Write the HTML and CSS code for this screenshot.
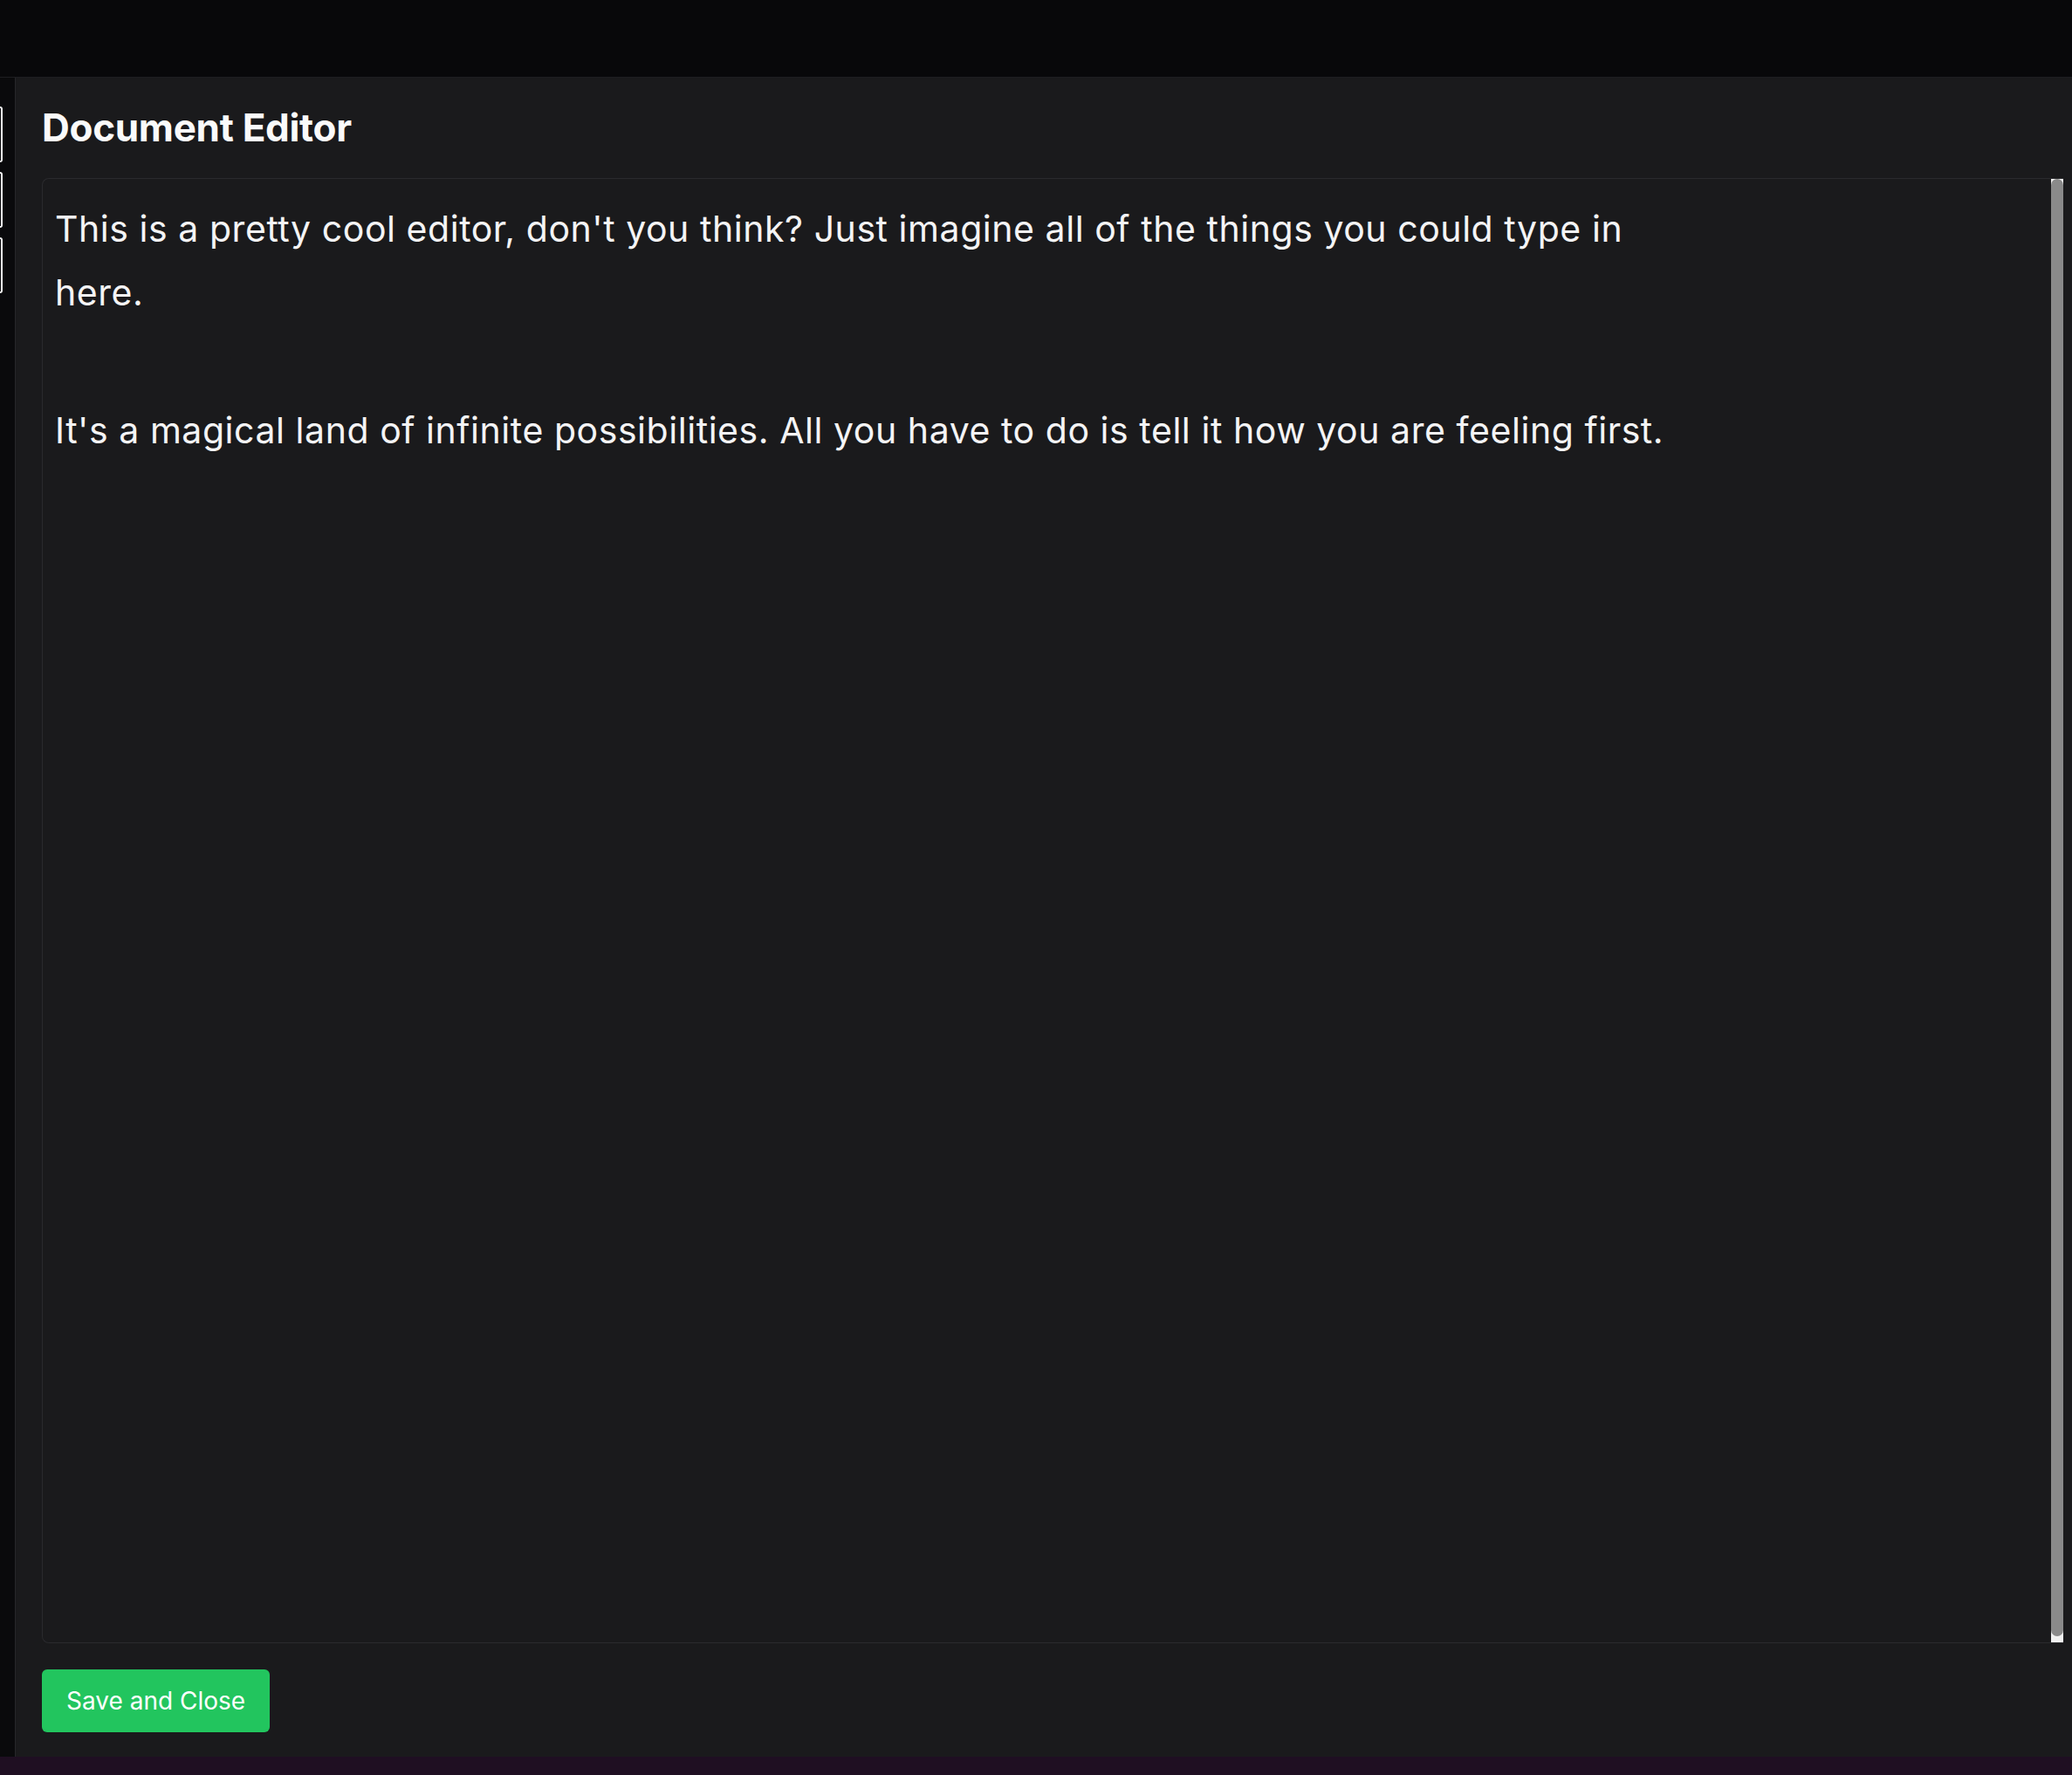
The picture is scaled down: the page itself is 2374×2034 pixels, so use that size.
FILE: index.html
```html
<!DOCTYPE html>
<html lang="en">
<head>
<meta charset="utf-8">
<title>Document Editor</title>
<link rel="stylesheet" href="styles.css">
</head>
<body>
<div class="topbar"></div>
<div class="main">
  <aside class="rail">
    <span class="tab"></span>
    <span class="tab"></span>
    <span class="tab"></span>
  </aside>
  <section class="panel">
    <h1 class="title">Document Editor</h1>
    <div class="editor">
      <div class="content">
        <p class="para">This is a pretty cool editor, don't you think? Just imagine all of the things you could type in here.</p>
        <p class="para gap">It's a magical land of infinite possibilities. All you have to do is tell it how you are feeling first.</p>
      </div>
      <div class="scrollbar"><div class="thumb"></div></div>
    </div>
    <div class="actions">
      <button class="btn">Save and Close</button>
    </div>
  </section>
</div>
</body>
</html>
```
FILE: styles.css
```css
html, body {
  margin: 0;
  padding: 0;
}
body {
  width: 2374px;
  height: 2034px;
  background: #1f0f22;
  font-family: Inter, "Noto Sans", sans-serif;
  overflow: hidden;
}
.topbar {
  height: 88px;
  background: #08080a;
  border-bottom: 1px solid #1e1e21;
}
.main {
  display: flex;
  height: 1924px;
}
.rail {
  width: 17px;
  flex: none;
  background: #0a0a0c;
  border-right: 1px solid #26262a;
  display: flex;
  flex-direction: column;
  gap: 11px;
  padding-top: 33px;
}
.tab {
  display: block;
  width: 1px;
  height: 60px;
  border: 2px solid #f4f4f5;
  border-left: none;
  border-radius: 0 5px 5px 0;
}
.panel {
  flex: 1;
  background: #1a1a1c;
  display: flex;
  flex-direction: column;
  padding: 30px 10px 28px 30px;
  min-width: 0;
}
.title {
  margin: 0;
  font-size: 44px;
  line-height: 54px;
  font-weight: 700;
  color: #fafafa;
  letter-spacing: -0.3px;
}
.editor {
  margin-top: 31px;
  flex: 1;
  display: flex;
  border: 1px solid #2a2a2d;
  border-right: none;
  border-radius: 8px 0 0 8px;
  min-height: 0;
}
.content {
  flex: 1;
  padding: 21px 14px;
  color: #f4f4f5;
  font-size: 41px;
  line-height: 73px;
  letter-spacing: 0.55px;
}
.para {
  margin: 0;
  max-width: 1868px;
}
.para.gap {
  margin-top: 85px;
}
.scrollbar {
  width: 14px;
  flex: none;
  background: #f1f1f1;
  padding-bottom: 7px;
  display: flex;
}
.thumb {
  flex: 1;
  background: #8a8a8a;
  border-radius: 7px;
}
.actions {
  margin-top: 30px;
  display: flex;
}
.btn {
  height: 72px;
  padding: 0 28px;
  background: #22c55e;
  color: #ffffff;
  border: none;
  border-radius: 6px;
  font-family: Inter, "Noto Sans", sans-serif;
  font-size: 28px;
  font-weight: 400;
  letter-spacing: 0;
}
```
